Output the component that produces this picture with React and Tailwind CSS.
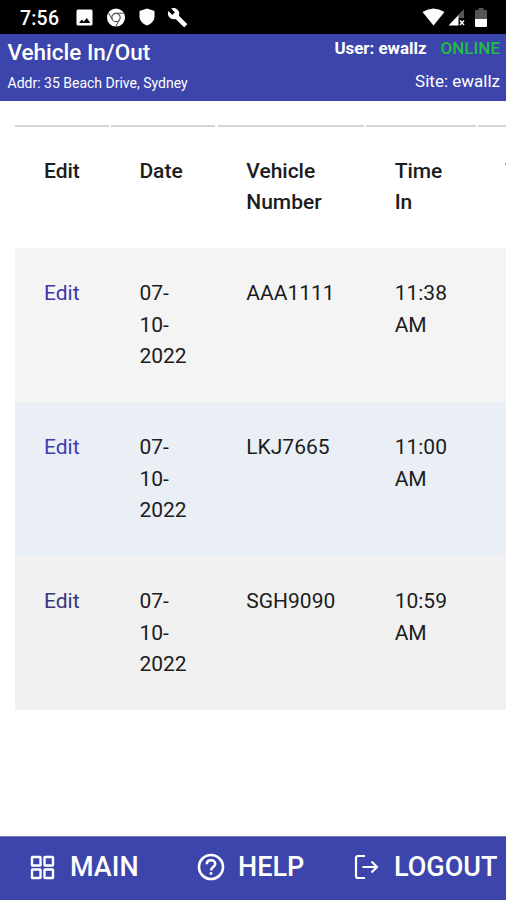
import React from 'react';

const rows = [
    { id: 1, date: ['07-', '10-', '2022'], vehicle: 'AAA1111', time: ['11:38', 'AM'], bg: 'bg-[#f4f4f4]', link: 'text-[#3c36a8]' },
    { id: 2, date: ['07-', '10-', '2022'], vehicle: 'LKJ7665', time: ['11:00', 'AM'], bg: 'bg-[#eaeef5]', link: 'text-[#3c3cb0]' },
    { id: 3, date: ['07-', '10-', '2022'], vehicle: 'SGH9090', time: ['10:59', 'AM'], bg: 'bg-[#f1f1f1]', link: 'text-[#38347f]' },
];

const columns = [
    { id: 'edit', lines: ['Edit'], pad: 'pl-[29.5px]' },
    { id: 'date', lines: ['Date'], pad: 'pl-[28.5px]' },
    { id: 'vehicle', lines: ['Vehicle', 'Number'], pad: 'pl-[28.5px]' },
    { id: 'timeIn', lines: ['Time', 'In'], pad: 'pl-[28.5px]' },
    { id: 'timeOut', lines: ['Time'], pad: 'pl-[27px]' },
];

const Lines = ({ lines }) => lines.map((line, i) => <div key={i}>{line}</div>);

const StatusBar = () => (
    <div className="flex h-[34px] shrink-0 items-center bg-black pl-[20px] pr-[18px] text-white">
        <span className="mt-[4px] w-[55.5px] text-[19.5px] font-medium leading-none tracking-[0.2px]">7:56</span>
        <svg className="h-[17px] w-[17px]" viewBox="0 0 17 17">
            <rect x="0.5" y="0.5" width="16" height="16" rx="1.5" fill="#fff" />
            <path d="M3 14l2.800-3.600 2 2.200L10.800 9l3.600 5z" fill="#000" />
        </svg>
        <svg className="ml-[13px] h-[19px] w-[20px]" viewBox="0 0 20 20">
            <circle cx="10" cy="10" r="9.5" fill="#fff" />
            <circle cx="10" cy="10" r="4.4" fill="none" stroke="#444" strokeWidth="1.2" />
            <path d="M10 5.6h8.2M6.2 12.2L2.2 5.3M13.8 12.2l-4 7" stroke="#555" strokeWidth="1.1" fill="none" />
        </svg>
        <svg className="ml-[13px] h-[18px] w-[16px]" viewBox="0 0 16 18">
            <path d="M8 0.5L15.5 3v5.5c0 4-3 7.3-7.5 9C3.5 15.8.5 12.5.5 8.500V3z" fill="#fff" />
        </svg>
        <svg className="ml-[12px] h-[21px] w-[21px]" viewBox="0 0 24 24">
            <path d="M22.700 19l-9.100-9.100c.9-2.300.4-5-1.500-6.900-2-2-5-2.400-7.400-1.300L9 6 6 9 1.600 4.700C.4 7.100.9 10.100 2.900 12.100c1.900 1.900 4.600 2.400 6.900 1.500l9.100 9.100c.4.4 1 .4 1.400 0l2.300-2.300c.5-.4.5-1.100.1-1.400z" fill="#fff" />
        </svg>
        <svg className="ml-auto h-[18px] w-[23px]" viewBox="0 0 23 18">
            <path d="M0.500 4Q11.500-3 22.500 4L11.500 17.500z" fill="#fff" />
        </svg>
        <svg className="ml-[3px] h-[18px] w-[17px]" viewBox="0 0 17 18">
            <path d="M16 1v9h-6V7z" fill="#555" />
            <path d="M0.500 17.500L10.500 7v10.500z" fill="#fff" />
            <path d="M12 12.500l4 4.500M16 12.500L12 17" stroke="#fff" strokeWidth="1.5" />
        </svg>
        <svg className="ml-[10px] mr-[1px] h-[19px] w-[12px]" viewBox="0 0 12 19">
            <path d="M3.500 0h5v2H11a1 1 0 0 1 1 1v8H0V3a1 1 0 0 1 1-1h2.500z" fill="#555" />
            <path d="M0 11h12v7a1 1 0 0 1-1 1H1a1 1 0 0 1-1-1z" fill="#fff" />
        </svg>
    </div>
);

const Header = () => (
    <div className="flex h-[67px] shrink-0 justify-between bg-[#3c45ab] pl-[7.5px] pr-[6px] text-white">
        <div>
            <h1 className="mt-[4px] text-[22.5px] font-medium leading-[28px]">Vehicle In/Out</h1>
            <p className="mt-[8px] text-[14px] leading-[18px]">Addr: 35 Beach Drive, Sydney</p>
        </div>
        <div className="text-right">
            <p className="mt-[4px] text-[16.9px] font-bold leading-[20px]">
                User: ewallz
                <span className="ml-[14px] text-[17px] font-medium text-[#1fbd43]">ONLINE</span>
            </p>
            <p className="mt-[13px] text-[17px] leading-[20px]">Site: ewallz</p>
        </div>
    </div>
);

const VehicleTable = () => (
    <div className="mt-[24px] ml-[14.5px] w-[600px] text-[21px] leading-[31.6px] text-[#1c1c1c]">
        <div className="grid h-[123px] grid-cols-[94px_104.5px_146px_109.5px_109px] gap-x-[2.4px] font-medium">
            {columns.map((col) => (
                <div key={col.id} className={`border-t-2 border-[#d3d5d4] pt-[28.5px] ${col.pad}`}>
                    <Lines lines={col.lines} />
                </div>
            ))}
        </div>
        {rows.map((row) => (
            <div
                key={row.id}
                className={`grid h-[154px] grid-cols-[94px_104.5px_146px_109.5px_109px] gap-x-[2.4px] pt-[30px] ${row.bg}`}
            >
                <a className={`pl-[29.5px] ${row.link}`}>Edit</a>
                <div className="pl-[28.5px]"><Lines lines={row.date} /></div>
                <div className="pl-[28.5px]">{row.vehicle}</div>
                <div className="pl-[28.5px]"><Lines lines={row.time} /></div>
            </div>
        ))}
    </div>
);

const Footer = () => (
    <div className="mt-auto flex h-[64px] shrink-0 items-center border-t border-[#777db8] bg-[#3c45ab] pb-[3px] text-[27px] font-medium leading-none text-white">
        <div className="flex w-[166px] items-center pl-[30px]">
            <svg className="mr-[15px] h-[25px] w-[25px]" viewBox="0 0 25 25" fill="none" stroke="#fff" strokeWidth="2.4">
                <rect x="2" y="2" width="8.500" height="8.500" rx="0.5" />
                <rect x="14.500" y="2" width="8.500" height="8.500" rx="0.5" />
                <rect x="2" y="14.500" width="8.500" height="8.500" rx="0.5" />
                <rect x="14.500" y="14.500" width="8.500" height="8.500" rx="0.5" />
            </svg>
            <span>MAIN</span>
        </div>
        <div className="flex w-[158px] items-center pl-[31px]">
            <svg className="mr-[13px] h-[28px] w-[28px]" viewBox="0 0 28 28" fill="none" stroke="#fff" strokeWidth="2.6">
                <circle cx="14" cy="14" r="12" />
                <path d="M9.800 11.200c0-2.500 1.800-4 4.200-4s4.200 1.500 4.200 3.700c0 3-4.200 3.200-4.200 6.600" />
                <path d="M14 19.200v2.500" />
            </svg>
            <span>HELP</span>
        </div>
        <div className="flex items-center pl-[29px]">
            <svg className="mr-[15px] h-[26px] w-[26px]" viewBox="0 0 26 26" fill="none" stroke="#fff" strokeWidth="2.2">
                <path d="M12 2H5a2 2 0 0 0-2 2v18a2 2 0 0 0 2 2h7" />
                <path d="M9.500 13h14M18.500 7.500l5.500 5.500-5.500 5.500" />
            </svg>
            <span>LOGOUT</span>
        </div>
    </div>
);

export default function App() {
    return (
        <div className="flex h-[900px] w-[506px] flex-col overflow-hidden bg-white font-['Roboto',sans-serif]">
            <StatusBar />
            <Header />
            <VehicleTable />
            <Footer />
        </div>
    );
}
